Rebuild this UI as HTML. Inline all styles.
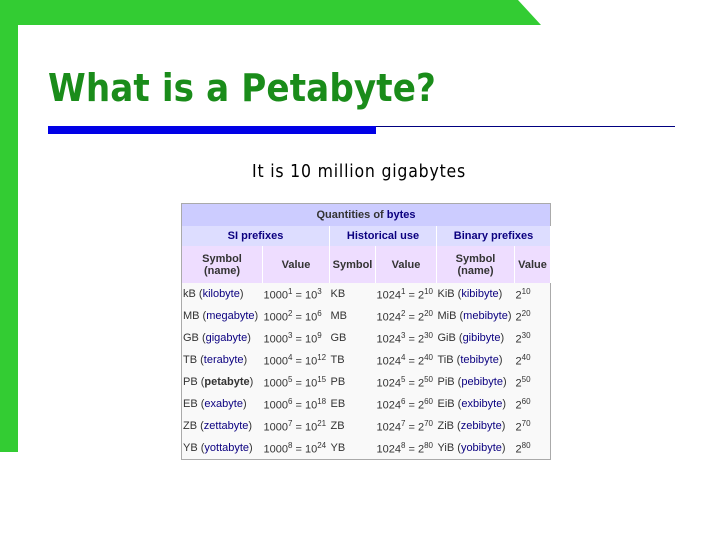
<!DOCTYPE html>
<html><head><style>
body{margin:0;width:720px;height:540px;background:#fff;position:relative;overflow:hidden;font-family:"DejaVu Sans","Liberation Sans",sans-serif}
.g1{position:absolute;left:0;top:0;width:18px;height:452px;background:#33cc33}
.g2{position:absolute;left:0;top:0;width:541px;height:25px;background:#33cc33;clip-path:polygon(0 0,518px 0,541px 25px,0 25px)}
h1{position:absolute;left:48px;top:66px;margin:0;font:bold 38px "DejaVu Sans Condensed","DejaVu Sans",sans-serif;color:#1a8c1a;letter-spacing:0.1px}
.b1{position:absolute;left:48px;top:126px;width:328px;height:8px;background:#0000e6}
.b2{position:absolute;left:376px;top:126px;width:299px;height:1px;background:#000080}
.sub{position:absolute;left:252px;top:162px;font:17.5px "DejaVu Sans Condensed","DejaVu Sans",sans-serif;color:#000;letter-spacing:0.8px;white-space:nowrap}
table{position:absolute;left:181px;top:203px;width:369px;table-layout:fixed;border-collapse:collapse;font:11px "Liberation Sans",sans-serif;color:#333;background:#f9f9f9;border:1px solid #aaa}
td{padding:0 1px;white-space:nowrap;overflow:hidden}
.t td{background:#ccccff;height:22px;text-align:center;font-weight:bold}
.s td{background:#ddddff;height:20px;text-align:center;font-weight:bold;color:#0b0080;border-right:1px solid #fff}
.h td{background:#eeddff;height:37px;text-align:center;font-weight:bold;border-right:1px solid #fff}
.d td{height:22px}
a{color:#0b0080}
sup{font-size:8px}
</style></head><body>
<div class="g1"></div><div class="g2"></div>
<h1>What is a Petabyte?</h1>
<div class="b1"></div><div class="b2"></div>
<div class="sub">It is 10 million gigabytes</div>
<table>
<colgroup><col style="width:81px"><col style="width:67px"><col style="width:46px"><col style="width:61px"><col style="width:78px"><col style="width:36px"></colgroup>
<tr class="t"><td colspan="6">Quantities of <a>bytes</a></td></tr>
<tr class="s"><td colspan="2">SI prefixes</td><td colspan="2">Historical use</td><td colspan="2">Binary prefixes</td></tr>
<tr class="h"><td>Symbol<br>(name)</td><td>Value</td><td>Symbol</td><td>Value</td><td>Symbol<br>(name)</td><td>Value</td></tr>
<tr class="d"><td>kB (<a>kilobyte</a>)</td><td>1000<sup>1</sup> = 10<sup>3</sup></td><td>KB</td><td>1024<sup>1</sup> = 2<sup>10</sup></td><td>KiB (<a>kibibyte</a>)</td><td>2<sup>10</sup></td></tr>
<tr class="d"><td>MB (<a>megabyte</a>)</td><td>1000<sup>2</sup> = 10<sup>6</sup></td><td>MB</td><td>1024<sup>2</sup> = 2<sup>20</sup></td><td>MiB (<a>mebibyte</a>)</td><td>2<sup>20</sup></td></tr>
<tr class="d"><td>GB (<a>gigabyte</a>)</td><td>1000<sup>3</sup> = 10<sup>9</sup></td><td>GB</td><td>1024<sup>3</sup> = 2<sup>30</sup></td><td>GiB (<a>gibibyte</a>)</td><td>2<sup>30</sup></td></tr>
<tr class="d"><td>TB (<a>terabyte</a>)</td><td>1000<sup>4</sup> = 10<sup>12</sup></td><td>TB</td><td>1024<sup>4</sup> = 2<sup>40</sup></td><td>TiB (<a>tebibyte</a>)</td><td>2<sup>40</sup></td></tr>
<tr class="d"><td>PB (<b>petabyte</b>)</td><td>1000<sup>5</sup> = 10<sup>15</sup></td><td>PB</td><td>1024<sup>5</sup> = 2<sup>50</sup></td><td>PiB (<a>pebibyte</a>)</td><td>2<sup>50</sup></td></tr>
<tr class="d"><td>EB (<a>exabyte</a>)</td><td>1000<sup>6</sup> = 10<sup>18</sup></td><td>EB</td><td>1024<sup>6</sup> = 2<sup>60</sup></td><td>EiB (<a>exbibyte</a>)</td><td>2<sup>60</sup></td></tr>
<tr class="d"><td>ZB (<a>zettabyte</a>)</td><td>1000<sup>7</sup> = 10<sup>21</sup></td><td>ZB</td><td>1024<sup>7</sup> = 2<sup>70</sup></td><td>ZiB (<a>zebibyte</a>)</td><td>2<sup>70</sup></td></tr>
<tr class="d"><td>YB (<a>yottabyte</a>)</td><td>1000<sup>8</sup> = 10<sup>24</sup></td><td>YB</td><td>1024<sup>8</sup> = 2<sup>80</sup></td><td>YiB (<a>yobibyte</a>)</td><td>2<sup>80</sup></td></tr>
</table>
</body></html>
